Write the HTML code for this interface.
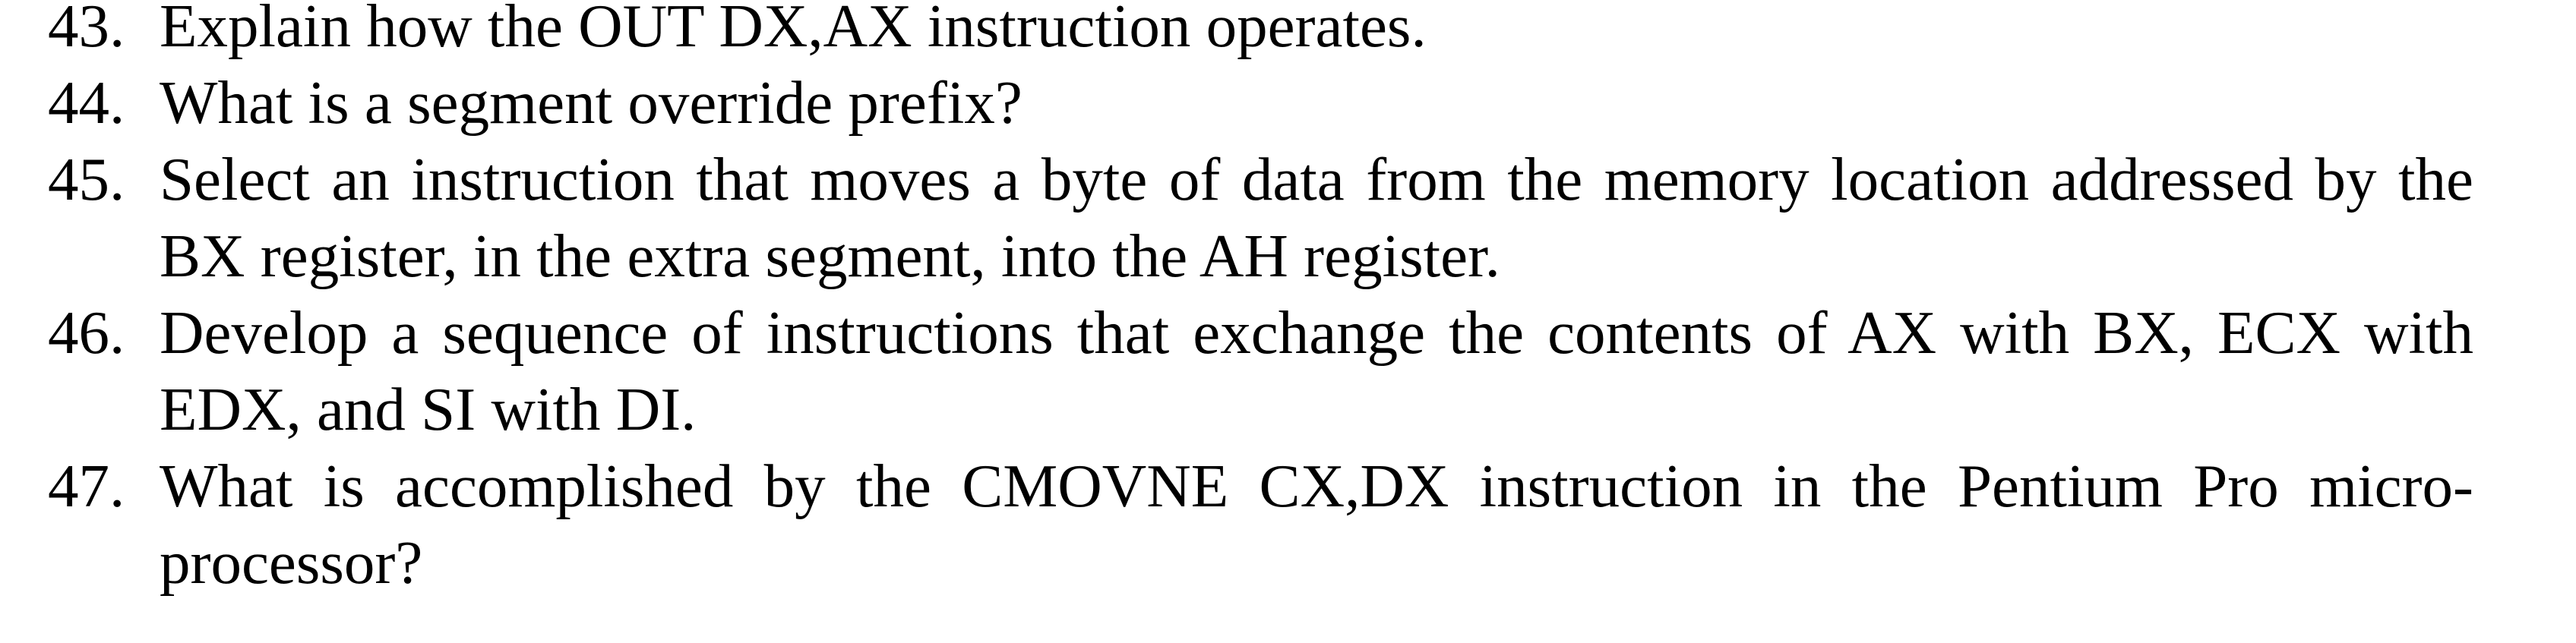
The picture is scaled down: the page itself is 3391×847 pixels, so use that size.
<!DOCTYPE html>
<html>
<head>
<meta charset="utf-8">
<style>
html,body{margin:0;padding:0;background:#fff;}
body{width:3391px;height:847px;position:relative;overflow:hidden;
font-family:"Liberation Serif","Times New Roman",serif;font-size:81px;color:#000;}
.l{position:absolute;left:0;width:3391px;height:101px;line-height:101px;white-space:nowrap;}
.n{position:absolute;left:63px;top:0;}
.t{position:absolute;left:210px;top:0;}
.j{width:3046px;text-align:justify;text-align-last:justify;white-space:normal;}
</style>
</head>
<body>
<div class="l" style="top:-16px"><span class="n">43.</span><div class="t">Explain how the OUT DX,AX instruction operates.</div></div>
<div class="l" style="top:85px"><span class="n">44.</span><div class="t">What is a segment override prefix?</div></div>
<div class="l" style="top:186px"><span class="n">45.</span><div class="t j">Select an instruction that moves a byte of data from the memory location addressed by the</div></div>
<div class="l" style="top:287px"><div class="t">BX register, in the extra segment, into the AH register.</div></div>
<div class="l" style="top:388px"><span class="n">46.</span><div class="t j">Develop a sequence of instructions that exchange the contents of AX with BX, ECX with</div></div>
<div class="l" style="top:489px"><div class="t">EDX, and SI with DI.</div></div>
<div class="l" style="top:590px"><span class="n">47.</span><div class="t j">What is accomplished by the CMOVNE CX,DX instruction in the Pentium Pro micro-</div></div>
<div class="l" style="top:691px"><div class="t">processor?</div></div>
</body>
</html>
